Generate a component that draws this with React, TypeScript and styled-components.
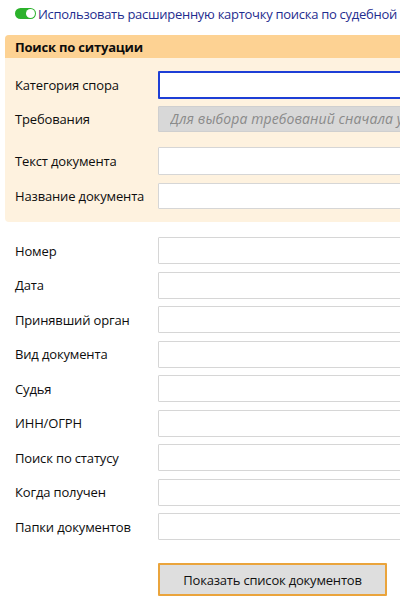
import React from "react";
import styled, { createGlobalStyle } from "styled-components";

const Global = createGlobalStyle`
  html, body { margin: 0; padding: 0; background: #fff; overflow: hidden; }
  body { font-family: "Open Sans", "Noto Sans", sans-serif; font-size: 13px; color: #0d0d0d; }
`;

const Page = styled.div`
  width: 400px;
  overflow: hidden;
  padding-top: 7px;
`;

const ToggleRow = styled.label`
  display: flex;
  align-items: center;
  gap: 2px;
  padding-left: 15px;
  height: 13px;
  white-space: nowrap;
  color: #1f2d8f;
  font-size: 13px;
  letter-spacing: -0.28px;
`;

const Switch = styled.span`
  position: relative;
  flex: none;
  width: 21px;
  height: 11px;
  border-radius: 6px;
  background: #2bb22b;
  &::after {
    content: "";
    position: absolute;
    right: 1px;
    top: 1px;
    width: 9px;
    height: 9px;
    border-radius: 50%;
    background: #fff;
  }
`;

const Panel = styled.section`
  margin: 15px 0 0 5px;
  width: 420px;
  border-radius: 4px 0 0 4px;
  background: #fef2df;
  overflow: hidden;
`;

const PanelHeader = styled.div`
  height: 23px;
  background: #fdd293;
  display: flex;
  align-items: center;
  padding-left: 10px;
  font-weight: 700;
  font-size: 13px;
  letter-spacing: -0.2px;
`;

const PanelBody = styled.div`
  padding: 13px 0 13px 10px;
  display: flex;
  flex-direction: column;
`;

const Row = styled.div<{ $gap?: number }>`
  display: flex;
  align-items: center;
  margin-top: ${(p) => p.$gap ?? 0}px;
`;

const Label = styled.span<{ $w: number }>`
  flex: none;
  width: ${(p) => p.$w}px;
  white-space: nowrap;
  font-size: 13px;
  letter-spacing: -0.15px;
`;

const Field = styled.input<{ $h?: number; $variant?: "focus" | "disabled" | "plain" }>`
  box-sizing: border-box;
  flex: none;
  width: 300px;
  height: ${(p) => p.$h ?? 27}px;
  margin: 0;
  padding: 0 11px;
  font-family: inherit;
  font-size: 13px;
  outline: none;
  border-radius: 1px;
  background: ${(p) => (p.$variant === "disabled" ? "#d8d8d8" : "#fff")};
  border: ${(p) =>
    p.$variant === "focus"
      ? "2px solid #1e3fd6"
      : p.$variant === "disabled"
      ? "1px solid #cfcfcf"
      : "1px solid #d6d6d6"};
  &::placeholder {
    color: #8a8a8a;
    font-style: italic;
    font-size: 14px;
    letter-spacing: 0.1px;
  }
`;

const List = styled.div`
  margin-top: 15px;
  padding-left: 15px;
  display: flex;
  flex-direction: column;
  gap: 7.5px;
`;

const ButtonRow = styled.div`
  padding-left: 158px;
  margin-top: 23px;
`;

const Button = styled.button`
  box-sizing: border-box;
  width: 229px;
  height: 33px;
  background: #dedede;
  border: 2px solid #eaa43c;
  border-radius: 1px;
  font-family: inherit;
  font-size: 13px;
  color: #111;
  letter-spacing: -0.2px;
  cursor: pointer;
`;

const lower = [
  "Номер",
  "Дата",
  "Принявший орган",
  "Вид документа",
  "Судья",
  "ИНН/ОГРН",
  "Поиск по статусу",
  "Когда получен",
  "Папки документов",
];

export default function App() {
  return (
    <Page>
      <Global />
      <ToggleRow>
        <Switch />
        Использовать расширенную карточку поиска по судебной
      </ToggleRow>
      <Panel>
        <PanelHeader>Поиск по ситуации</PanelHeader>
        <PanelBody>
          <Row>
            <Label $w={143}>Категория спора</Label>
            <Field $h={28} $variant="focus" />
          </Row>
          <Row $gap={7}>
            <Label $w={143}>Требования</Label>
            <Field
              $h={26}
              $variant="disabled"
              disabled
              placeholder="Для выбора требований сначала укажите категорию спора"
            />
          </Row>
          <Row $gap={15}>
            <Label $w={143}>Текст документа</Label>
            <Field $h={28} />
          </Row>
          <Row $gap={8}>
            <Label $w={143}>Название документа</Label>
            <Field $h={26} />
          </Row>
        </PanelBody>
      </Panel>
      <List>
        {lower.map((l) => (
          <Row key={l}>
            <Label $w={143}>{l}</Label>
            <Field />
          </Row>
        ))}
      </List>
      <ButtonRow>
        <Button>Показать список документов</Button>
      </ButtonRow>
    </Page>
  );
}
